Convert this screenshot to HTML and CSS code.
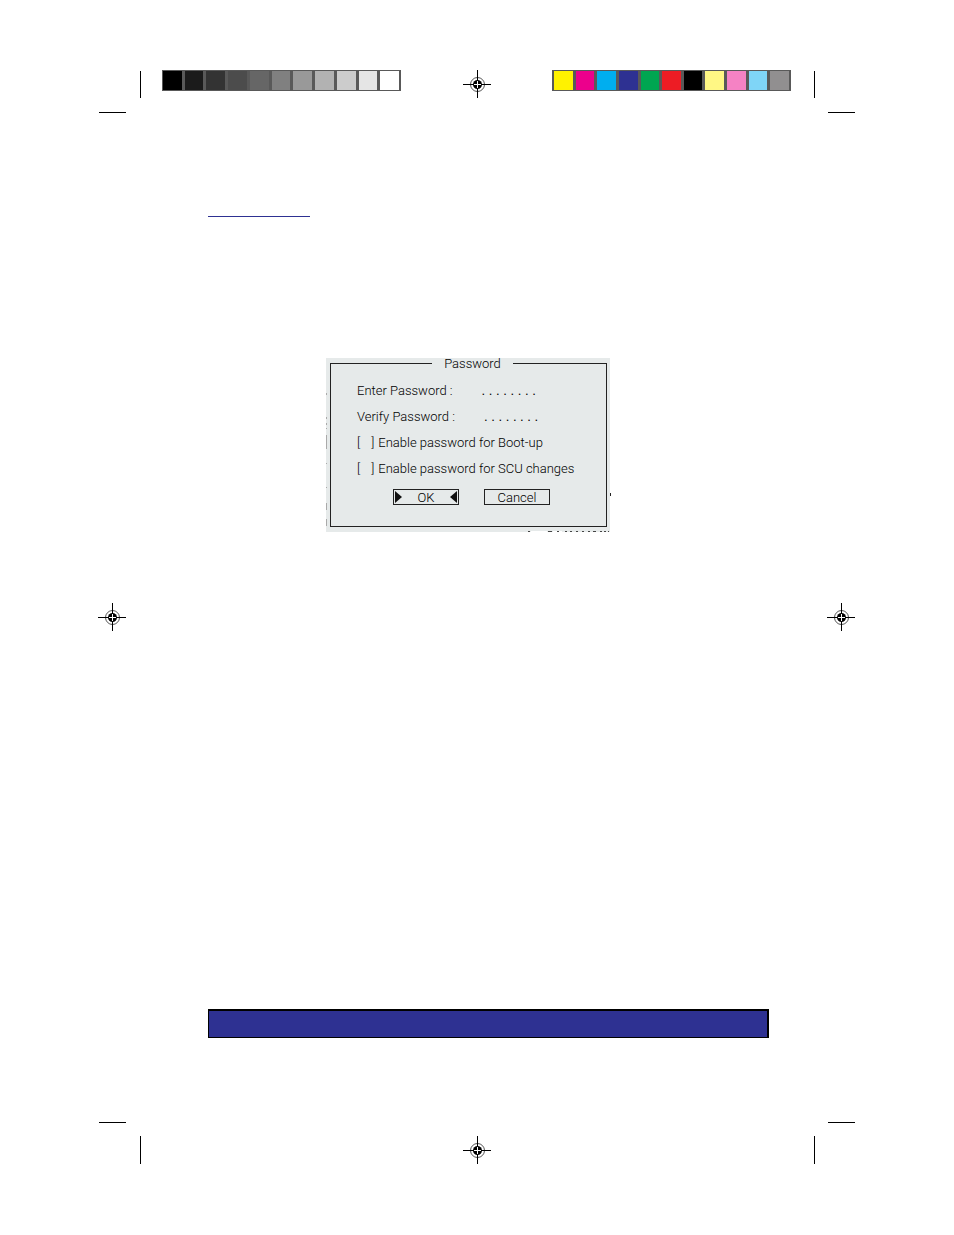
FILE: index.html
```html
<!DOCTYPE html>
<html lang="en">
<head>
    <meta charset="UTF-8">
    <meta name="viewport" content="width=device-width, initial-scale=1.0">
    <title>Password</title>
    <link rel="stylesheet" href="styles.css">
</head>
<body>
    <!-- Registration mark, used on all four sides -->
    <svg class="defs" width="0" height="0" aria-hidden="true">
        <symbol id="target" viewBox="0 0 28 28">
            <circle cx="14.5" cy="14.5" r="7" fill="none" stroke="#555" stroke-width="1"/>
            <circle cx="14.5" cy="14.5" r="4.5" fill="#000"/>
            <path d="M0 14.5H28M14.5 0V28" stroke="#000" stroke-width="1"/>
            <path d="M11 14.5H18M14.5 11V18" stroke="#fff" stroke-width="1"/>
        </symbol>
    </svg>

    <div class="sheet">
        <header class="marks">
            <svg width="43" height="43" aria-hidden="true"><path d="M42.5 1V28M1 42.5H28" stroke="#000"/></svg>
            <div class="bar bar-gray">
                <span class="k100"></span><span class="k90"></span><span class="k80"></span><span class="k70"></span><span class="k60"></span><span class="k50"></span><span class="k40"></span><span class="k30"></span><span class="k20"></span><span class="k10"></span><span class="k0"></span>
            </div>
            <svg width="28" height="28" aria-hidden="true"><use href="#target"/></svg>
            <div class="bar bar-color">
                <span class="yellow"></span><span class="magenta"></span><span class="cyan"></span><span class="blue"></span><span class="green"></span><span class="red"></span><span class="k100"></span><span class="light-yellow"></span><span class="pink"></span><span class="light-cyan"></span><span class="mid-gray"></span>
            </div>
            <svg width="42" height="43" aria-hidden="true"><path d="M1.5 1V28M15 42.5H42" stroke="#000"/></svg>
        </header>

        <main class="middle">
            <svg width="28" height="28" aria-hidden="true"><use href="#target"/></svg>
            <div class="content">
                <a class="top-link" href="#" aria-label="Top"></a>

                <form class="dialog">
                    <fieldset>
                        <legend>Password</legend>
                        <div class="field">
                            <label for="enter">Enter Password :</label>
                            <input type="text" id="enter" value=". . . . . . . .">
                        </div>
                        <div class="field">
                            <label for="verify">Verify Password :</label>
                            <input type="text" id="verify" value=". . . . . . . .">
                        </div>
                        <label class="check"><span>[</span><input type="checkbox"><span>]</span>Enable password for Boot-up</label>
                        <label class="check"><span>[</span><input type="checkbox"><span>]</span>Enable password for SCU changes</label>
                        <div class="buttons">
                            <button type="button" class="ok">
                                <svg width="8" height="14" aria-hidden="true"><path d="M1 1L8 7L1 13Z" fill="#111"/></svg>
                                OK
                                <svg width="8" height="14" aria-hidden="true"><path d="M7 1L0 7L7 13Z" fill="#111"/></svg>
                            </button>
                            <button type="button">Cancel</button>
                        </div>
                    </fieldset>
                    <!-- Specks along the edges of the scan -->
                    <svg class="specks" width="286" height="174" aria-hidden="true">
                        <path d="M.5 35V37M.5 59V61M.5 65V67M.5 70V71M.5 77V91M.5 105V106M.5 129V130M.5 145V152M.5 161V168" stroke="#aaa"/>
                        <path d="M284.5 135V138" stroke="#222"/>
                        <path d="M205 173.5H221M227 173.5H236" stroke="#fff"/>
                        <path d="M202 173.5H204M222 173.5H226M231 173.5H233M239 173.5H241M244 173.5H246M250 173.5H252M256 173.5H258M262 173.5H264M267 173.5H270M274 173.5H276M278 173.5H280M282 173.5H283" stroke="#444"/>
                    </svg>
                </form>

                <div class="banner"></div>
            </div>
            <svg width="28" height="28" aria-hidden="true"><use href="#target"/></svg>
        </main>

        <footer class="marks">
            <svg width="43" height="42" aria-hidden="true"><path d="M42.5 14V42M1 .5H28" stroke="#000"/></svg>
            <span></span>
            <svg class="bottom-target" width="28" height="28" aria-hidden="true"><use href="#target"/></svg>
            <span></span>
            <svg width="42" height="42" aria-hidden="true"><path d="M1.5 14V42M15 .5H42" stroke="#000"/></svg>
        </footer>
    </div>
</body>
</html>
```
FILE: styles.css
```css
* {
    box-sizing: border-box;
}
body {
    margin: 0;
    background-color: #fff;
    color: #000;
    font-family: Roboto, "Liberation Sans", Arial, sans-serif;
    font-size: 13px;
    font-weight: 300;
}
svg {
    display: block;
}
.defs {
    position: absolute;
}
.sheet {
    display: flex;
    flex-direction: column;
    min-height: 100vh;
    padding: 70px 99px 71px 98px;
}
.marks {
    display: grid;
    grid-template-columns: 43px 1fr 28px 1fr 42px;
    align-items: start;
}
.bottom-target {
    align-self: end;
}

/* Colour bars */
.bar {
    display: flex;
    gap: 3px;
    width: 239px;
    height: 21px;
    background-color: #595959;
}
.bar span {
    flex: 1;
}
.bar-gray {
    margin-left: 21px;
    padding: 1px 2px 1px 1px;
}
.bar-color {
    justify-self: end;
    margin-right: 22px;
    padding: 1px 2px;
}
.k100 { background-color: #000; }
.k90 { background-color: #1b1b1b; }
.k80 { background-color: #333; }
.k70 { background-color: #4c4c4c; }
.k60 { background-color: #666; }
.k50 { background-color: #808080; }
.k40 { background-color: #999; }
.k30 { background-color: #b2b2b2; }
.k20 { background-color: #ccc; }
.k10 { background-color: #e5e5e5; }
.k0 { background-color: #fff; }
.yellow { background-color: #fff200; }
.magenta { background-color: #ec008c; }
.cyan { background-color: #00aeef; }
.blue { background-color: #2e3192; }
.green { background-color: #00a651; }
.red { background-color: #ed1c24; }
.light-yellow { background-color: #fff784; }
.pink { background-color: #f582c4; }
.light-cyan { background-color: #7fd5f7; }
.mid-gray { background-color: #918f90; }

.middle {
    flex: 1;
    display: grid;
    grid-template-columns: 28px 1fr 28px;
    align-items: center;
    padding-bottom: 1px;
}
.content {
    align-self: stretch;
    display: flex;
    flex-direction: column;
    align-items: flex-start;
    padding: 103px 58px 83px 82px;
}
.top-link {
    width: 102px;
    border-bottom: 1px solid #2e3192;
}

/* Password dialog */
.dialog {
    position: relative;
    width: 284px;
    margin: 141px 0 40px 118px;
    padding: 0 3px 5px 4px;
    background-color: #e6eaea;
}
fieldset {
    margin: 0;
    padding: 8px 26px 21px;
    border: 1px solid #222;
}
legend {
    width: 81px;
    margin-left: 4px;
    padding: 0;
    line-height: 11px;
    text-align: center;
}
.field, .check {
    display: flex;
    align-items: center;
    height: 26px;
    white-space: nowrap;
}
.field input {
    width: 70px;
    height: 20px;
    margin-left: 29px;
    padding: 0;
    border: 0;
    background: none;
    color: inherit;
    font: 13px "Liberation Sans", Arial, sans-serif;
}
.check input {
    appearance: none;
    width: 11px;
    height: 12px;
    margin: 0;
}
.check input:checked {
    background-color: #222;
}
.check span:last-of-type {
    margin-right: 4px;
}
.buttons {
    display: flex;
    gap: 25px;
    margin-top: 8px;
    padding-left: 36px;
}
button {
    display: flex;
    align-items: center;
    justify-content: center;
    width: 66px;
    height: 16px;
    padding: 0;
    border: 1px solid #222;
    background: none;
    color: inherit;
    font: inherit;
    cursor: pointer;
}
.ok {
    justify-content: space-between;
}
.specks {
    position: absolute;
    top: 0;
    left: 0;
    pointer-events: none;
}

.banner {
    width: 100%;
    height: 29px;
    margin-top: auto;
    border: 1px solid #000;
    border-width: 2px 2px 1px 1px;
    background-color: #2e3192;
}
```
